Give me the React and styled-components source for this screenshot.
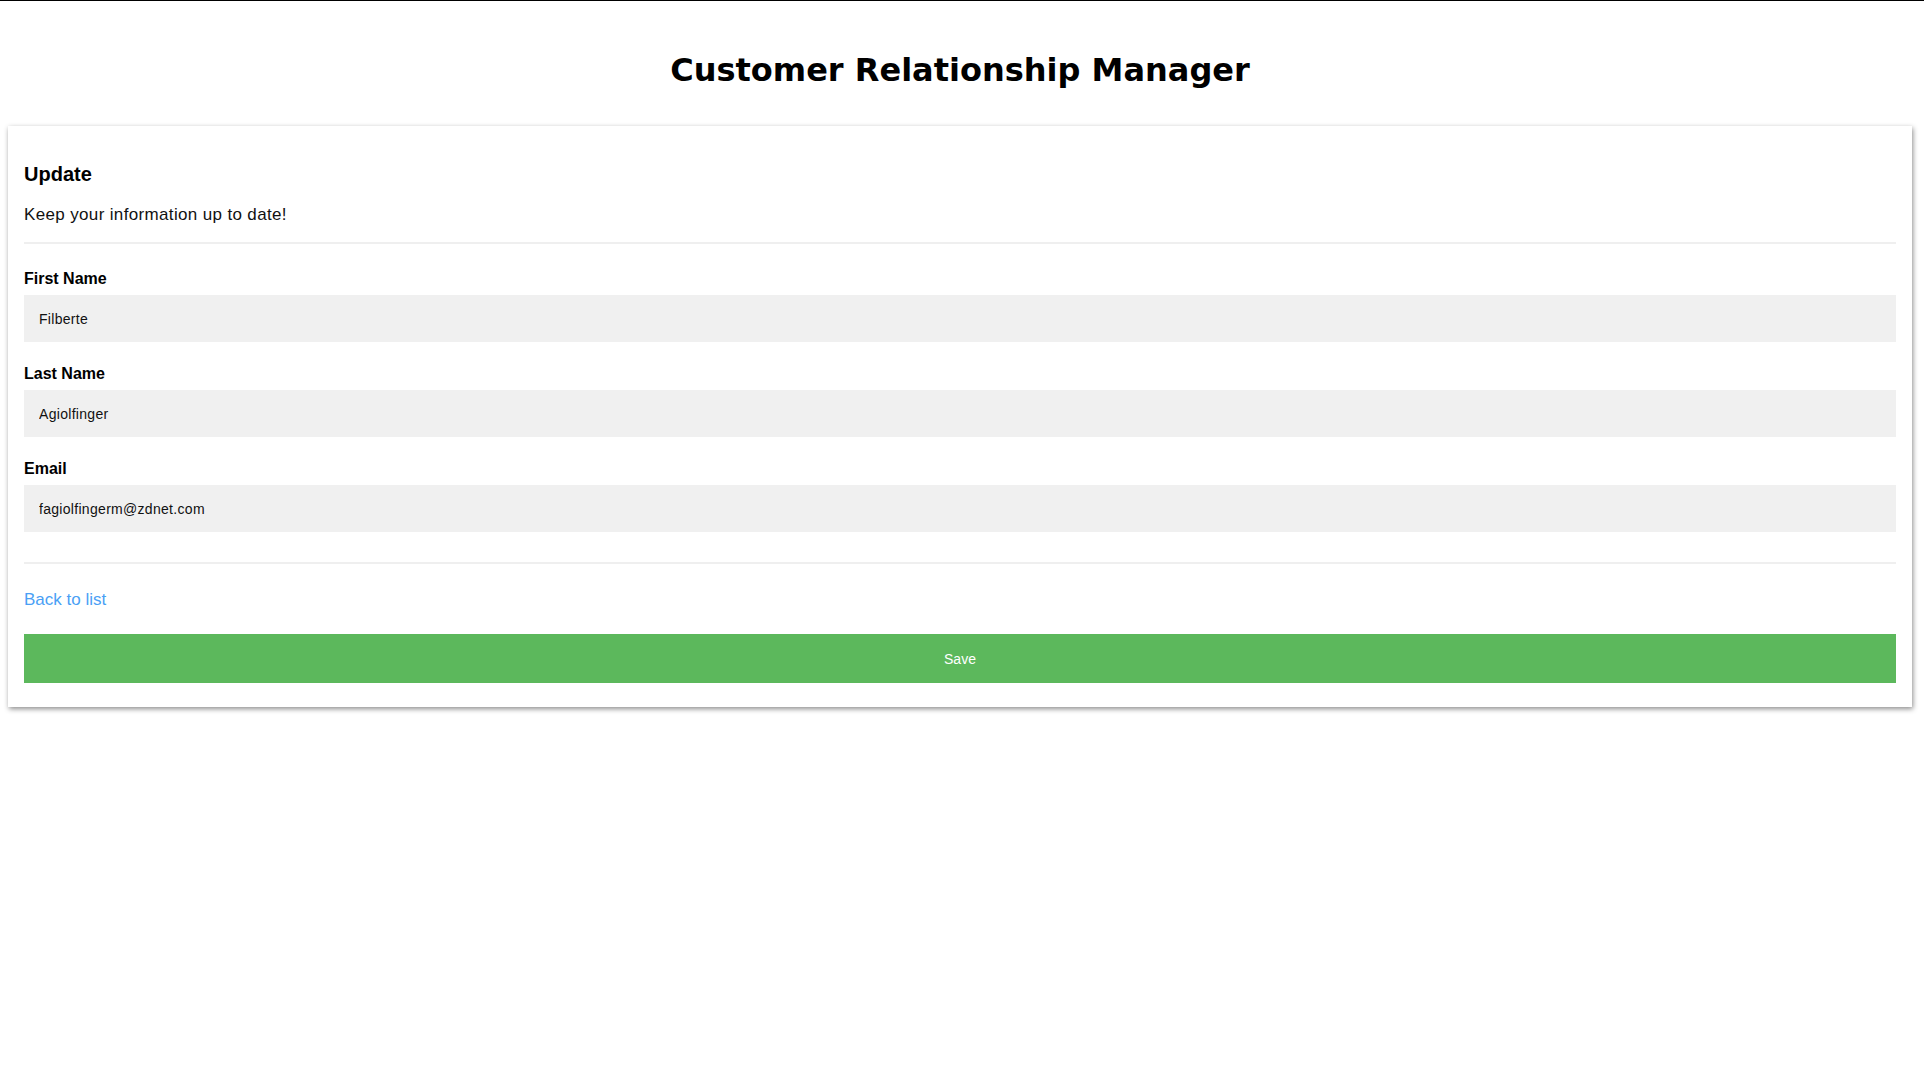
import React from "react";
import styled, { createGlobalStyle } from "styled-components";

const GlobalStyle = createGlobalStyle`
  html, body {
    margin: 0;
    padding: 0;
    background: #fff;
  }
  body {
    min-height: 100vh;
    border-top: 1px solid #000;
    font-family: "Liberation Sans", Arial, sans-serif;
    color: #111;
  }
  * {
    box-sizing: border-box;
  }
`;

const fields = [
  { label: "First Name", value: "Filberte", type: "text" },
  { label: "Last Name", value: "Agiolfinger", type: "text" },
  { label: "Email", value: "fagiolfingerm@zdnet.com", type: "email" },
];

const App = () => {
  return (
    <>
      <GlobalStyle />
      <Page>
        <Header>Customer Relationship Manager</Header>
        <Card>
          <Heading>Update</Heading>
          <SubText>Keep your information up to date!</SubText>
          <Divider />
          <Form onSubmit={(e) => e.preventDefault()}>
            {fields.map((f) => (
              <Field key={f.label}>
                <Label>{f.label}</Label>
                <Input type={f.type} defaultValue={f.value} />
              </Field>
            ))}
          </Form>
          <Divider $top={30} />
          <BackLink href="#">Back to list</BackLink>
          <SaveBtn type="button">Save</SaveBtn>
        </Card>
      </Page>
    </>
  );
};

const Page = styled.div`
  display: flex;
  flex-direction: column;
  padding: 0 12px 40px 8px;
`;

const Header = styled.h1`
  margin: 49px 0 36px;
  font-family: "DejaVu Sans", "Liberation Sans", sans-serif;
  font-size: 32px;
  line-height: 40px;
  font-weight: bold;
  text-align: center;
  color: #000;
`;

const Card = styled.div`
  display: flex;
  flex-direction: column;
  padding: 36px 16px 24px;
  background: #fff;
  box-shadow: 1px 2px 5px rgba(0, 0, 0, 0.45);
`;

const Heading = styled.h2`
  margin: 0;
  font-size: 20px;
  line-height: 24px;
  font-weight: bold;
  color: #000;
`;

const SubText = styled.p`
  margin: 19px 0 0;
  font-size: 17px;
  line-height: 20px;
  letter-spacing: 0.35px;
  color: #111;
`;

const Divider = styled.div`
  margin-top: ${(p) => p.$top || 17}px;
  height: 2px;
  background: #efefef;
`;

const Form = styled.form`
  display: flex;
  flex-direction: column;
  gap: 22px;
  padding-top: 25px;
`;

const Field = styled.div`
  display: flex;
  flex-direction: column;
`;

const Label = styled.label`
  margin-bottom: 6px;
  font-size: 16px;
  line-height: 20px;
  font-weight: bold;
  color: #000;
`;

const Input = styled.input`
  width: 100%;
  height: 47px;
  padding: 0 15px;
  border: none;
  outline: none;
  background: #f0f0f0;
  font-family: "Liberation Sans", Arial, sans-serif;
  font-size: 14px;
  letter-spacing: 0.3px;
  color: #111;
`;

const BackLink = styled.a`
  align-self: flex-start;
  margin-top: 26px;
  font-size: 17px;
  line-height: 20px;
  color: #4a9ff5;
  text-decoration: none;
`;

const SaveBtn = styled.button`
  margin-top: 24px;
  height: 49px;
  border: none;
  background: #5cb85c;
  color: #fff;
  font-family: "Liberation Sans", Arial, sans-serif;
  font-size: 14px;
  cursor: pointer;
`;

export default App;
